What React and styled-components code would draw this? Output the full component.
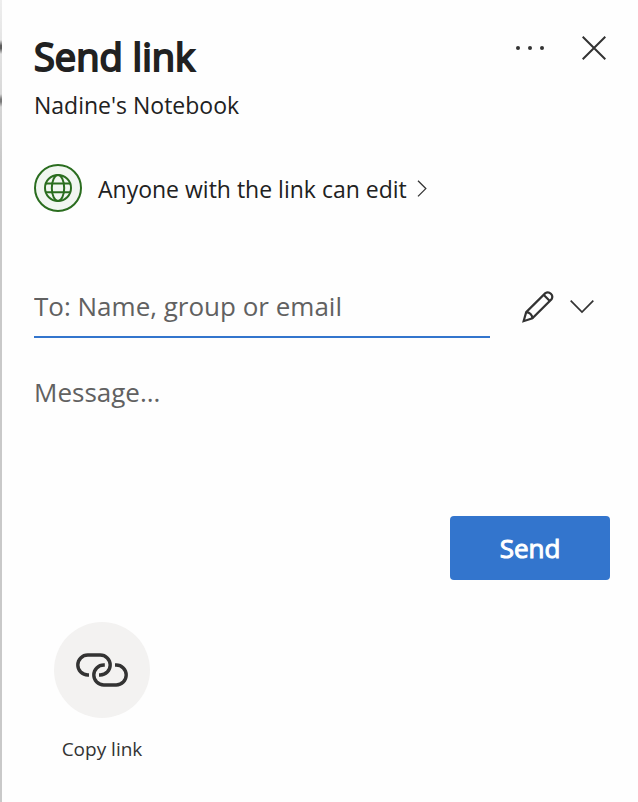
import React from 'react';
import styled, { createGlobalStyle } from 'styled-components';

const GlobalStyle = createGlobalStyle`
    *, *::before, *::after {
        box-sizing: border-box;
    }

    body {
        margin: 0;
        background: #fefefe;
        font-family: "Open Sans", "Noto Sans", sans-serif;
        color: #212121;
    }

    button, input, textarea {
        font-family: inherit;
        color: inherit;
    }
`;

const Page = styled.div`
    display: flex;
    min-height: 100vh;
`;

// sliver of the dimmed page behind the panel
const Backdrop = styled.div`
    flex: none;
    width: 2px;
    background:
        linear-gradient(transparent, #5c5c5c 40%, #5c5c5c 60%, transparent) 0 40px / 2px 14px no-repeat,
        linear-gradient(transparent, #7a7a7a 40%, #7a7a7a 60%, transparent) 0 94px / 2px 13px no-repeat,
        linear-gradient(#eeeeee, #c9c9c9 160px);
`;

const Panel = styled.form`
    flex: 1;
    display: flex;
    flex-direction: column;
    padding: 32px 28px 32px 32px;
`;

const Header = styled.header`
    display: flex;
    justify-content: space-between;
    align-items: flex-start;
`;

const Title = styled.h1`
    margin: 0;
    font-size: 38px;
    line-height: 48px;
    font-weight: 400;
    -webkit-text-stroke: 2px currentColor;
`;

const Subtitle = styled.p`
    margin: 8px 0 0;
    font-size: 23px;
    line-height: 34px;
`;

const IconGroup = styled.div`
    display: flex;
    gap: ${({ $gap }) => $gap || 0}px;
`;

const IconButton = styled.button`
    display: flex;
    align-items: center;
    justify-content: center;
    width: 32px;
    height: 32px;
    padding: 0;
    border: 0;
    background: none;
    color: #333333;
    cursor: pointer;
`;

const Permission = styled.button`
    display: flex;
    align-items: center;
    align-self: flex-start;
    margin-top: 42px;
    padding: 0;
    border: 0;
    background: none;
    font-size: 23px;
    line-height: 36px;
    cursor: pointer;
`;

const PermissionText = styled.span`
    padding: 2px 10px 0 16px;
`;

const Recipients = styled.div`
    display: flex;
    align-items: center;
    gap: 32px;
    margin-top: 64px;
    padding-right: 12px;
`;

const RecipientInput = styled.input`
    flex: 1;
    min-width: 0;
    height: 62px;
    padding: 0;
    border: 0;
    border-bottom: 2px solid #3375cd;
    background: none;
    font-size: 26px;
    outline: none;

    &::placeholder {
        color: #616161;
        opacity: 1;
    }
`;

const Message = styled.textarea`
    height: 144px;
    margin-top: 34px;
    padding: 0;
    border: 0;
    background: none;
    font-size: 26px;
    line-height: 40px;
    resize: none;
    outline: none;

    &::placeholder {
        color: #616161;
        opacity: 1;
    }
`;

const SendButton = styled.button`
    align-self: flex-end;
    width: 160px;
    height: 64px;
    border: 0;
    border-radius: 4px;
    background: #3375cd;
    color: #ffffff;
    font-size: 26px;
    -webkit-text-stroke: 1px currentColor;
    cursor: pointer;
`;

const CopyLink = styled.button`
    display: flex;
    flex-direction: column;
    align-items: center;
    align-self: flex-start;
    gap: 17px;
    width: 136px;
    margin-top: 42px;
    padding: 0;
    border: 0;
    background: none;
    color: #333333;
    font-size: 19px;
    line-height: 28px;
    cursor: pointer;
`;

const CopyCircle = styled.span`
    display: flex;
    align-items: center;
    justify-content: center;
    width: 96px;
    height: 96px;
    border-radius: 50%;
    background: #f3f2f1;
`;

function MoreIcon() {
  return (
    <svg width="32" height="32" viewBox="0 0 32 32" fill="currentColor" aria-hidden="true">
      <circle cx="4" cy="16" r="2" />
      <circle cx="16" cy="16" r="2" />
      <circle cx="28" cy="16" r="2" />
    </svg>
  );
}

function CloseIcon() {
  return (
    <svg width="24" height="24" viewBox="0 0 24 24" stroke="currentColor" strokeWidth="2" aria-hidden="true">
      <path d="M.7.7l22.6 22.6M23.3.7L.7 23.3" />
    </svg>
  );
}

function GlobeIcon() {
  return (
    <svg width="48" height="48" viewBox="0 0 48 48" fill="none" stroke="#2a6d1f" strokeWidth="2" aria-hidden="true">
      <circle cx="24" cy="24" r="23" fill="#f1f6f1" />
      <circle cx="24" cy="24" r="13" />
      <ellipse cx="24" cy="24" rx="6.2" ry="13" />
      <path d="M12 19.5h24M12 28.2h24" />
    </svg>
  );
}

function ChevronRight() {
  return (
    <svg width="10" height="18" viewBox="0 0 10 18" fill="none" stroke="#333333" strokeWidth="1.3" aria-hidden="true">
      <path d="M1 1.8L8.8 9.6L1 17.4" />
    </svg>
  );
}

function ChevronDown() {
  return (
    <svg width="24" height="14" viewBox="0 0 24 14" fill="none" stroke="currentColor" strokeWidth="1.7" aria-hidden="true">
      <path d="M.7 .7L12 12L23.3 .7" />
    </svg>
  );
}

function PencilIcon() {
  return (
    <svg width="32" height="32" viewBox="0 1 32 32" fill="none" stroke="currentColor" strokeWidth="2.2" aria-hidden="true">
      <path d="M1.6 31.2L4.2 22.2L23.3 3.1a4.5 4.5 0 0 1 6.2 6.2L10.4 28.4Z" />
      <path d="M21.6 4.8L27.8 11M4.2 22.2c3.4 0 6.2 2.8 6.2 6.2" />
    </svg>
  );
}

function LinkIcon() {
  return (
    <svg width="52" height="34" viewBox="0 0 52 34" fill="none" stroke="currentColor" strokeWidth="3.4" aria-hidden="true">
      <path d="M13 22h-1.2a10 10 0 0 1 0-20h12.4a10 10 0 0 1 0 20H23" />
      <path d="M28.8 12h-1a10 10 0 0 0 0 20h12.4a10 10 0 0 0 0-20H39" />
    </svg>
  );
}

export default function App() {
  return (
    <>
      <GlobalStyle />
      <Page>
        <Backdrop />
        <Panel onSubmit={(e) => e.preventDefault()}>
          <Header>
            <div>
              <Title>Send link</Title>
              <Subtitle>Nadine's Notebook</Subtitle>
            </div>
            <IconGroup $gap={32}>
              <IconButton type="button" aria-label="More options"><MoreIcon /></IconButton>
              <IconButton type="button" aria-label="Close"><CloseIcon /></IconButton>
            </IconGroup>
          </Header>
          <Permission type="button">
            <GlobeIcon />
            <PermissionText>Anyone with the link can edit</PermissionText>
            <ChevronRight />
          </Permission>
          <Recipients>
            <RecipientInput type="text" aria-label="Recipients" placeholder="To: Name, group or email" />
            <IconGroup $gap={12}>
              <IconButton type="button" aria-label="Can edit"><PencilIcon /></IconButton>
              <IconButton type="button" aria-label="Change permission"><ChevronDown /></IconButton>
            </IconGroup>
          </Recipients>
          <Message aria-label="Message" placeholder="Message..." />
          <SendButton type="submit">Send</SendButton>
          <CopyLink type="button">
            <CopyCircle><LinkIcon /></CopyCircle>
            Copy link
          </CopyLink>
        </Panel>
      </Page>
    </>
  );
}
